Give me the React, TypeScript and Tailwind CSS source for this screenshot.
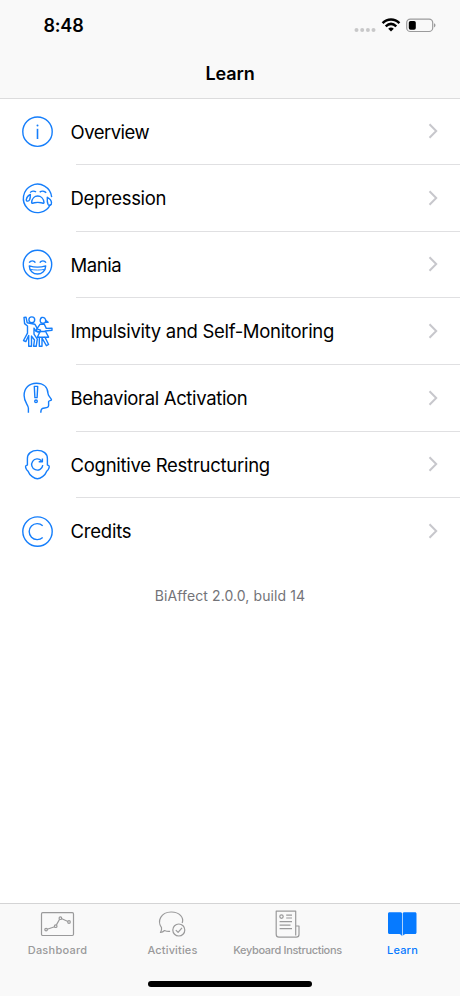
import type { ReactNode } from 'react';

type Topic = {
  title: string;
  tracking: string;
  icon: ReactNode;
};

type Tab = {
  label: string;
  tracking: string;
  icon: ReactNode;
  active?: boolean;
};

const topics: Topic[] = [
  {
    title: 'Overview',
    tracking: 'tracking-[-0.5px]',
    icon: (
      <>
        <circle cx="17.5" cy="17.7" r="14.7" />
        <path d="M17.5 14.8v10.2" strokeWidth="1.6" />
        <circle cx="17.5" cy="11.4" r="1" fill="currentColor" stroke="none" />
      </>
    ),
  },
  {
    title: 'Depression',
    tracking: 'tracking-[-0.34px]',
    icon: (
      <>
        <path d="M30.5 24.2A14.2 14.2 0 1 1 31.7 17.1" />
        <path d="M10.2 12.6C11.6 10.8 14.4 10.6 16 12.1M19.7 12.1C21.6 10.6 24.4 10.8 26.2 12.8" />
        <path d="M11.6 22.6C12.2 13.8 23.2 13.8 24 22.6C24 24 22.6 23 21.2 22.7C18.8 22.2 16.6 22.2 14.4 22.7C13 23 11.6 24 11.6 22.6Z" />
        <path d="M10.4 14.4C8 15.6 6.6 17.8 6.3 19.5C6 21.6 8.8 21.7 9.6 19.8C10.3 18.2 10.4 16.4 10.4 14.4Z" />
        <path d="M27.3 17.3C30 18.7 31.3 20.6 31.5 22.6C31.8 25.3 29 26.3 28 24.3C27.2 22.6 27.1 20 27.3 17.3Z" />
      </>
    ),
  },
  {
    title: 'Mania',
    tracking: 'tracking-[-0.42px]',
    icon: (
      <>
        <circle cx="17.5" cy="17.5" r="14.2" />
        <path d="M9.2 15.7C10.6 13.2 14 13.2 15.4 15.7M19.8 15.7C21.2 13.2 24.6 13.2 26 15.7" />
        <path d="M9.3 18.9C9.6 29.8 25.4 29.8 25.7 18.9C20.8 20.4 14.2 20.4 9.3 18.9Z" />
        <path d="M10.3 22.3C15 23.3 20 23.3 24.7 22.3" strokeWidth="0.9" />
      </>
    ),
  },
  {
    title: 'Impulsivity and Self-Monitoring',
    tracking: 'tracking-[-0.31px]',
    icon: (
      <>
        <circle cx="11.8" cy="5.8" r="2.9" />
        <path d="M4 3.4L6 3.2L7.2 8.8L14.8 10.2L17.7 15.1L20.5 16.2L19.8 18.1L16 17.4L14 14.2V20.2L17.3 25.1L16.2 32.3H13.6L14.5 26L11.5 22.1V32.3H8.7V21.5L5.8 27.6L3.5 26.5L7.5 19.2V12L4.6 9.6Z" />
        <path d="M21.8 3.5C24 2.8 26.2 5 25.6 7.3C25.1 9.5 22.3 9.8 20.9 8.4C19.7 7.2 20 4.3 21.8 3.5ZM25.3 6L28.2 8.2L25 8.3" />
        <path d="M20 10.3H24.3L26.3 14.4L32 14.2V16.3L25.3 17L28.6 23.2H25L28.6 30.5L26.4 31.7L22 24V32.3H19.3V23.2H17.4L20 17.5L17.2 17.7L16.3 15.6Z" />
        <path d="M20 17.5H25M19.3 23.2H25" />
      </>
    ),
  },
  {
    title: 'Behavioral Activation',
    tracking: 'tracking-[-0.34px]',
    icon: (
      <>
        <path d="M8.4 32.7V28.3C8.4 24.8 4.1 22.5 4.1 15.6C4.1 8 9.2 3.3 16.4 3.3C23.5 3.3 27.8 7.2 28 13.4C28 15.8 31.4 18.5 31.5 19.8C31.5 20.9 28.6 20.4 28.6 21.6V25.6C28.6 28.7 24.1 27.6 22.5 28.4C21 29.2 20.8 30.8 20.8 32.7" />
        <path d="M14.3 6.4H17.7L17.1 17.6H14.9Z" />
        <circle cx="16" cy="21.3" r="1.3" />
      </>
    ),
  },
  {
    title: 'Cognitive Restructuring',
    tracking: 'tracking-[-0.27px]',
    icon: (
      <>
        <path d="M17.4 3.4C11.5 3.4 7.4 6.7 7.4 11.6V18.1C5 18.2 5.2 20.3 6.5 22.5C7.4 24 8.1 23.9 8.6 25.3C9.5 28.3 14.5 31.8 17.4 31.8C20.3 31.8 25.3 28.3 26.2 25.3C26.7 23.9 27.4 24 28.3 22.5C29.6 20.3 29.8 18.2 27.4 18.1V11.6C27.4 6.7 23.3 3.4 17.4 3.4Z" />
        <path d="M22.8 18.2A5.6 5.6 0 1 1 21.4 13.7M22.4 11.6V14.8H18.7" />
      </>
    ),
  },
  {
    title: 'Credits',
    tracking: 'tracking-[-0.22px]',
    icon: (
      <>
        <circle cx="17.5" cy="17.6" r="14.7" />
        <path d="M22.7 11.8A8 8 0 1 0 22.7 23.4" />
      </>
    ),
  },
];

const tabs: Tab[] = [
  {
    label: 'Dashboard',
    tracking: 'tracking-[0.25px]',
    icon: (
      <>
        <rect x="3.5" y="3.7" width="32" height="22.8" rx="1.2" />
        <path d="M9.2 20.2L16.6 17.7M18.4 15.9L21.6 10.2M23.9 9.8L29.9 12.5" />
        <circle cx="8.1" cy="20.6" r="1.3" />
        <circle cx="17.7" cy="17.2" r="1.3" />
        <circle cx="22.4" cy="9.2" r="1.3" />
        <circle cx="31" cy="13" r="1.3" />
      </>
    ),
  },
  {
    label: 'Activities',
    tracking: 'tracking-[0.15px]',
    icon: (
      <>
        <path d="M17.1 22.3C14.7 22.7 12.7 22 11.5 21.5C10.3 22.7 9.1 23.2 7.4 23.5C8.6 21.8 8.9 20.5 8.5 18.7C3.8 12 8 3.2 18 3C26.4 2.8 31.2 8.6 29.2 14" />
        <circle cx="25.8" cy="21" r="6" />
        <path d="M22.8 21.1L25.1 23.4L29 18.8" />
      </>
    ),
  },
  {
    label: 'Keyboard Instructions',
    tracking: 'tracking-[-0.33px]',
    icon: (
      <>
        <path d="M27.7 26.6V2.2H8.2V25.2C8.2 27.2 9.2 28.2 11 28.2H28.2C30 28.2 31 27.2 31 25.5V17H27.7" />
        <circle cx="13.5" cy="7.6" r="1.7" />
        <path d="M18.2 6.1H24M18.2 9H24M11.6 12.6H24M11.6 16.2H22.5M11.6 19.7H24" />
      </>
    ),
  },
  {
    label: 'Learn',
    tracking: 'tracking-[0.2px]',
    active: true,
    icon: (
      <path
        d="M19 4.5V27.3C18.2 25.3 17 25 15.5 25H6.5C5.6 25 5 24.4 5 23.5V4.7C5 3.8 5.6 3.2 6.5 3.2H16.8C18.2 3.2 19 3.7 19 4.5ZM19.7 4.5V27.3C20.5 25.3 22 25 23.5 25H32C32.9 25 33.5 24.4 33.5 23.5V4.7C33.5 3.8 32.9 3.2 32 3.2H21.9C20.5 3.2 19.7 3.7 19.7 4.5Z"
        fill="currentColor"
        stroke="none"
      />
    ),
  },
];

function StatusBar() {
  return (
    <div className="flex h-[50px] items-center justify-between pl-[43.5px] pr-[24px]">
      <span className="pt-[2px] text-[18px] font-semibold leading-6 tracking-[-0.2px]">8:48</span>
      <svg width="82" height="20" viewBox="0 0 82 20" fill="none">
        <g fill="#c8c8c9">
          <circle cx="2.5" cy="15" r="2" />
          <circle cx="8.2" cy="15" r="2" />
          <circle cx="13.9" cy="15" r="2" />
          <circle cx="19.5" cy="15" r="2" />
        </g>
        <g stroke="#000" strokeWidth="2.5">
          <path d="M28.6 8.1C33.5 3.2 40.5 3.2 45.4 8.1" />
          <path d="M31.7 11.3C35 8.3 39 8.3 42.3 11.3" />
        </g>
        <path d="M34.2 13.7C35.9 12.2 38.1 12.2 39.8 13.7L37 16.4Z" fill="#000" />
        <rect x="52.7" y="4.1" width="26" height="12.4" rx="3.6" stroke="#9b9b9c" strokeWidth="1.2" />
        <rect x="54.8" y="6" width="7" height="8.8" rx="1.7" fill="#000" />
        <path d="M80 8.3C82 9 82 11.7 80 12.4Z" fill="#9b9b9c" />
      </svg>
    </div>
  );
}

function TopicRow({ topic, last }: { topic: Topic; last: boolean }) {
  return (
    <li className="flex h-[66.67px] pl-5">
      <div className="flex w-14 shrink-0 items-center">
        <svg
          width="36"
          height="36"
          viewBox="0 0 36 36"
          fill="none"
          stroke="currentColor"
          strokeWidth="1.4"
          strokeLinejoin="round"
          className="text-[#157efb]"
        >
          {topic.icon}
        </svg>
      </div>
      <div
        className={`flex flex-1 items-center justify-between border-b pr-[22px] ${
          last ? 'border-transparent' : 'border-[#e0e0e2]'
        }`}
      >
        <span className={`-ml-[5.5px] whitespace-nowrap pt-[0.8px] text-[18.5px] leading-6 ${topic.tracking}`}>
          {topic.title}
        </span>
        <svg width="10" height="16" viewBox="0 0 10 16" fill="none" stroke="#c7c7cc" strokeWidth="2">
          <path d="M1.5 1.3L8.2 8L1.5 14.7" />
        </svg>
      </div>
    </li>
  );
}

export default function App() {
  return (
    <div className="flex h-[996px] w-[460px] flex-col overflow-hidden bg-white font-['Inter','Liberation_Sans',sans-serif] text-black">
      <header className="h-[98.6px] shrink-0 border-b border-[#dcdcdd] bg-[#f9f9f9]">
        <StatusBar />
        <h1 className="text-center text-[18px] font-semibold leading-[48px] tracking-[-0.1px]">
          Learn
        </h1>
      </header>

      <main className="-mt-[0.3px] flex-1">
        <ul>
          {topics.map((topic, i) => (
            <TopicRow key={topic.title} topic={topic} last={i === topics.length - 1} />
          ))}
        </ul>
        <p className="mt-[21px] text-center text-[14px] leading-5 tracking-[0.1px] text-[#737378]">
          BiAffect 2.0.0, build 14
        </p>
      </main>

      <footer className="flex h-[93px] shrink-0 flex-col border-t border-[#d4d4d5] bg-[#f9f9f9]">
        <nav className="grid grid-cols-4 pt-[5px]">
          {tabs.map((tab) => (
            <div
              key={tab.label}
              className={`flex flex-col items-center ${tab.active ? 'text-[#067aff]' : 'text-[#9a9a9b]'}`}
            >
              <svg
                width="39"
                height="31"
                viewBox="0 0 39 31"
                fill="none"
                stroke="currentColor"
                strokeWidth="1.2"
                strokeLinejoin="round"
              >
                {tab.icon}
              </svg>
              <span className={`mt-[2px] whitespace-nowrap text-[11px] font-medium leading-4 ${tab.tracking}`}>
                {tab.label}
              </span>
            </div>
          ))}
        </nav>
        <div className="mx-auto mb-[9px] mt-auto h-[6px] w-[164px] rounded-full bg-black" />
      </footer>
    </div>
  );
}
